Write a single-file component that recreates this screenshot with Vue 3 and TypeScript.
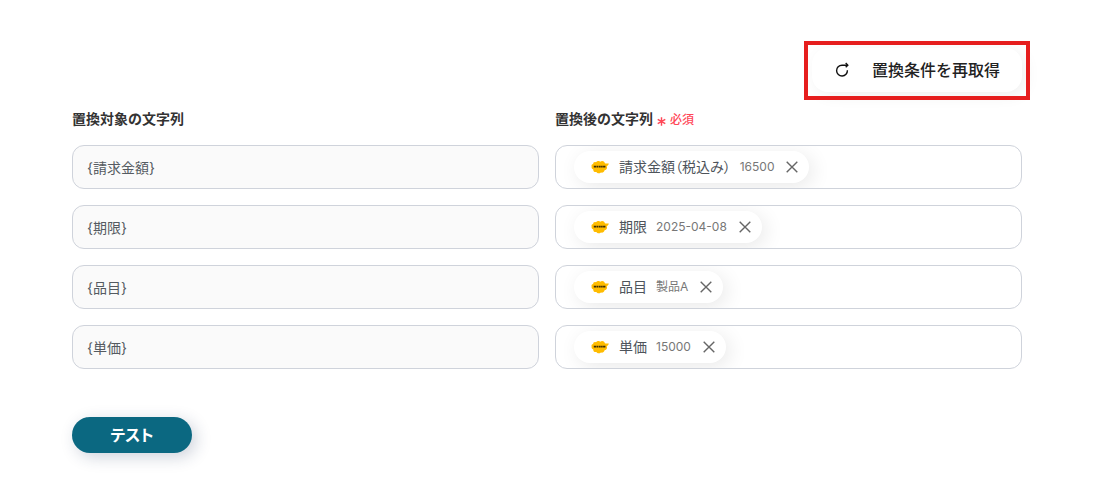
<script setup lang="ts">
import { reactive } from 'vue'

interface Chip {
  label: string
  value: string
}

interface Row {
  target: string
  chip: Chip | null
}

const rows = reactive<Row[]>([
  { target: '{請求金額}', chip: { label: '請求金額（税込み）', value: '16500' } },
  { target: '{期限}', chip: { label: '期限', value: '2025-04-08' } },
  { target: '{品目}', chip: { label: '品目', value: '製品A' } },
  { target: '{単価}', chip: { label: '単価', value: '15000' } },
])

function removeChip(row: Row): void {
  row.chip = null
}
</script>

<template>
  <main class="page">
    <div class="toolbar">
      <div class="highlight">
        <button type="button" class="refresh">
          <svg class="refresh-icon" viewBox="0 0 16 16" aria-hidden="true">
            <path d="M13.400 8.300A5.400 5.400 0 1 1 8 3.200H13.500" />
            <path d="M11.700 1.100L13.800 3.200L11.700 5.300" />
          </svg>
          <span>置換条件を再取得</span>
        </button>
      </div>
    </div>

    <div class="headings">
      <h2 id="target-heading">置換対象の文字列</h2>
      <div class="heading-group">
        <h2 id="result-heading">置換後の文字列</h2>
        <span class="required">
          <svg class="asterisk" viewBox="0 0 10 10" aria-hidden="true">
            <path d="M5 .2v9.600M.8 2.600l8.400 4.800M9.200 2.600L.8 7.400" />
          </svg>
          必須
        </span>
      </div>
    </div>

    <div class="rows">
      <div v-for="row in rows" :key="row.target" class="row">
        <input class="field target" type="text" :value="row.target" readonly aria-labelledby="target-heading" />
        <div class="field result" role="group" aria-labelledby="result-heading">
          <span v-if="row.chip" class="chip">
            <svg class="logo" viewBox="0 0 18 14" aria-hidden="true">
              <path
                class="cloud"
                d="M.6 6.400C.2 5 .9 3.900 2.200 3.900 2 2.300 3.700 1.500 5 2.300 6.100.8 8.300.6 9.300 1.700 10.800.4 13.400 1 13.900 3.300 15.200 3.700 16.600 3.300 17.800 3.400 17.500 4.800 16.700 5.500 15.700 5.900 16.700 8 15.700 9.900 13.600 10.200 13.200 12.300 11.300 13 9.900 12.500 8.500 13.900 6 13.500 5.400 12 3.600 12.500 2 11.200 2.300 9.400 1.100 9 .3 7.800.6 6.400Z"
              />
              <path class="wordmark" d="M2.800 6.600H5.400M5.800 6.700H7M7.500 6.700H9.700M10.100 6.700H11.700M12.100 6.700H14.400" />
            </svg>
            <span class="chip-label">{{ row.chip.label }}</span>
            <span class="chip-value">{{ row.chip.value }}</span>
            <button type="button" class="remove" :aria-label="row.chip.label + 'を削除'" @click="removeChip(row)">
              <svg viewBox="0 0 12 12" aria-hidden="true">
                <path d="M.7.7l10.600 10.600M11.300.7L.7 11.300" />
              </svg>
            </button>
          </span>
        </div>
      </div>
    </div>

    <button type="button" class="test">テスト</button>
  </main>
</template>

<style>
body {
  margin: 0;
  background: #fff;
}
</style>

<style scoped>
.page {
  box-sizing: border-box;
  padding: 48px 91px 48px 72px;
  color: #333;
  font-family: Inter, 'Noto Sans CJK JP', sans-serif;
  font-size: 14px;
  line-height: 20px;
}

button {
  border: 0;
  font-family: inherit;
  cursor: pointer;
}

.toolbar {
  display: flex;
  justify-content: flex-end;
}

.highlight {
  position: relative;
}

.highlight::after {
  content: '';
  position: absolute;
  inset: -7px -8px -8px;
  border: 4px solid #e61e1e;
  pointer-events: none;
}

.refresh {
  display: flex;
  align-items: center;
  gap: 22px;
  height: 44px;
  padding: 0 22px;
  border-radius: 16px;
  background: #fff;
  color: #222;
  font-size: 16px;
  font-weight: 500;
  line-height: 24px;
  box-shadow: 4px 4px 16px rgba(0, 0, 0, 0.06);
}

.refresh-icon {
  width: 16px;
  height: 16px;
  fill: none;
  stroke: #111;
  stroke-width: 1.4;
}

.headings,
.row {
  display: grid;
  grid-template-columns: 1fr 1fr;
  column-gap: 16px;
}

.headings {
  margin: 17px 0 16px;
}

.heading-group {
  display: flex;
  align-items: center;
  gap: 4px;
}

h2 {
  margin: 0;
  font-size: 14px;
  font-weight: 600;
  line-height: 20px;
}

.required {
  display: flex;
  align-items: center;
  gap: 4px;
  padding-top: 2px;
  color: #ff4757;
  font-size: 12px;
  font-weight: 500;
  line-height: 18px;
}

.asterisk {
  width: 9px;
  height: 9px;
  margin-top: 2px;
  fill: none;
  stroke: currentColor;
  stroke-width: 1.6;
}

.rows {
  display: grid;
  row-gap: 16px;
}

.field {
  box-sizing: border-box;
  min-width: 0;
  height: 44px;
  border: 1px solid #cfd3db;
  border-radius: 12px;
  background: #fff;
}

.target {
  padding: 0 14px 1px;
  background: #fafafa;
  color: #555b61;
  font-family: inherit;
  font-size: 14px;
}

.result {
  display: flex;
  align-items: center;
  padding: 0 18px;
  overflow: hidden;
}

.chip {
  display: flex;
  align-items: center;
  height: 32px;
  padding: 0 11px 0 17px;
  border-radius: 16px;
  background: #fff;
  box-shadow: 4px 4px 20px rgba(0, 0, 0, 0.09);
  white-space: nowrap;
}

.logo {
  width: 18px;
  height: 14px;
  margin-right: 10px;
}

.cloud {
  fill: #ffbc00;
}

.wordmark {
  fill: none;
  stroke: #3b2d05;
  stroke-width: 1.7;
}

.chip-label {
  margin-right: 9px;
  color: #4e545b;
  font-feature-settings: 'palt';
}

.chip-value {
  margin-right: 12px;
  color: #777;
  font-size: 12px;
}

.remove {
  display: flex;
  padding: 0;
  background: none;
}

.remove svg {
  width: 12px;
  height: 12px;
  fill: none;
  stroke: #666;
  stroke-width: 1.4;
}

.test {
  display: block;
  width: 120px;
  height: 36px;
  margin-top: 48px;
  padding: 0 0 2px;
  border-radius: 18px;
  background: #0b6881;
  color: #fff;
  font-size: 16px;
  font-weight: 700;
  font-feature-settings: 'palt';
  box-shadow: 4px 4px 16px rgba(30, 50, 90, 0.22);
}
</style>
